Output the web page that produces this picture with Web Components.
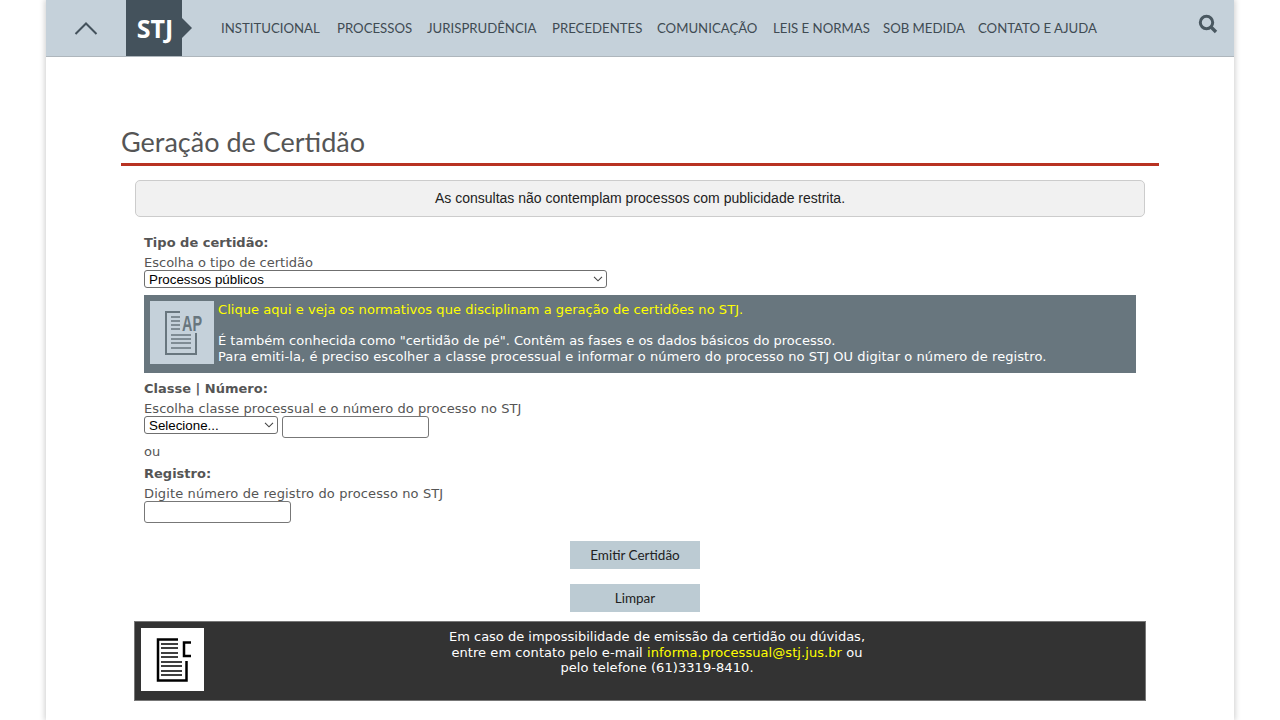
<!DOCTYPE html>
<html lang="pt-BR">
<head>
<meta charset="utf-8">
<title>Geração de Certidão</title>
<style>
    html, body { margin: 0; height: 720px; overflow: hidden; background: #fff; }
</style>
</head>
<body>
<stj-page>
    <stj-header></stj-header>
    <stj-title>Geração de Certidão</stj-title>
    <stj-notice>As consultas não contemplam processos com publicidade restrita.</stj-notice>
    <stj-form></stj-form>
    <stj-contact></stj-contact>
</stj-page>

<script>
class StjPage extends HTMLElement {
    constructor() {
        super();
        this.attachShadow({ mode: "open" });
        this.shadowRoot.innerHTML = `
<style>
    :host {
        display: block;
        width: 1188px;
        height: 720px;
        margin-left: 46px;
        background: #fff;
        box-shadow: 0 0 6px 1px #0003;
    }
</style>
<slot></slot>`;
    }
}

class StjHeader extends HTMLElement {
    constructor() {
        super();
        this.attachShadow({ mode: "open" });
        const items = ["INSTITUCIONAL", "PROCESSOS", "JURISPRUDÊNCIA", "PRECEDENTES", "COMUNICAÇÃO", "LEIS E NORMAS", "SOB MEDIDA", "CONTATO E AJUDA"];
        this.shadowRoot.innerHTML = `
<style>
    :host {
        display: flex;
        align-items: stretch;
        height: 56px;
        background: #c5d1da;
        border-bottom: 1px solid #aeb6bc;
        font-family: "Lato", sans-serif;
        color: #3f4b53;
    }
    .toggle {
        width: 80px;
        display: flex;
        align-items: center;
        justify-content: center;
    }
    .logo {
        position: relative;
        width: 56px;
        box-sizing: border-box;
        padding-left: 2px;
        margin-right: 39px;
        display: flex;
        align-items: center;
        justify-content: center;
        background: #44525c;
        color: #fff;
        font: 700 25px "Open Sans", sans-serif;
    }
    .logo::after {
        content: "";
        position: absolute;
        left: 56px;
        top: 18px;
        border-left: 10px solid #44525c;
        border-top: 10px solid transparent;
        border-bottom: 10px solid transparent;
    }
    nav {
        display: grid;
        grid-template-columns: 101px 75px 110px 90px 101px 95px 80px 121px;
        column-gap: 15px;
        align-items: center;
        flex: 1;
        font-size: 13.2px;
        white-space: nowrap;
    }
    .search {
        width: 52px;
        display: flex;
        justify-content: center;
        padding-top: 14px;
        box-sizing: border-box;
    }
</style>
<div class="toggle">
    <svg width="24" height="14" viewBox="0 0 24 14" fill="none" stroke="#44525c" stroke-width="2"><path d="M1.5 13 12 2.5 22.5 13"/></svg>
</div>
<div class="logo">STJ</div>
<nav>${items.map(item => `<span>${item}</span>`).join("")}</nav>
<div class="search">
    <svg width="20" height="20" viewBox="0 0 20 20" fill="none" stroke="#4a5861"><circle cx="8.500" cy="8.500" r="6.200" stroke-width="3"/><path d="M13 13l5 5" stroke-width="3.400"/></svg>
</div>`;
    }
}

class StjTitle extends HTMLElement {
    constructor() {
        super();
        this.attachShadow({ mode: "open" });
        this.shadowRoot.innerHTML = `
<style>
    :host {
        display: block;
        margin: 0 75px 0;
        padding-top: 70px;
        height: 36px;
        border-bottom: 3px solid #b83222;
        font: 400 27px/30px "Lato", sans-serif;
        color: #555;
    }
</style>
<slot></slot>`;
    }
}

class StjNotice extends HTMLElement {
    constructor() {
        super();
        this.attachShadow({ mode: "open" });
        this.shadowRoot.innerHTML = `
<style>
    :host {
        display: flex;
        align-items: center;
        justify-content: center;
        box-sizing: border-box;
        height: 37px;
        margin: 14px 89px 0;
        padding-bottom: 2px;
        background: #f1f1f1;
        border: 1px solid #ccc;
        border-radius: 5px;
        font: 14px "Liberation Sans", sans-serif;
        color: #222;
    }
</style>
<slot></slot>`;
    }
}

class StjField extends HTMLElement {
    constructor() {
        super();
        this.attachShadow({ mode: "open" });
        this.shadowRoot.innerHTML = `
<style>
    :host {
        display: block;
        font: 13px/15px "DejaVu Sans", Verdana, sans-serif;
        color: #555;
    }
    .label { font-weight: 700; font-size: 13px; line-height: 16px; margin-bottom: 5px; }
    .hint { line-height: 14px; letter-spacing: var(--hint-spacing, 0.07px); }
</style>
<div class="label">${this.getAttribute("label")}</div>
<div class="hint">${this.getAttribute("hint")}</div>
<slot></slot>`;
    }
}

class StjSelect extends HTMLElement {
    constructor() {
        super();
        this.attachShadow({ mode: "open" });
        this.shadowRoot.innerHTML = `
<style>
    :host {
        display: inline-block;
        position: relative;
        vertical-align: top;
        height: 18px;
    }
    select {
        appearance: none;
        display: block;
        box-sizing: border-box;
        width: 100%;
        height: 100%;
        margin: 0;
        padding: 0 0 0 4px;
        background: #fff;
        border: 1px solid #6f6f6f;
        border-radius: 3px;
        font: 13.33px "Liberation Sans", sans-serif;
        color: #000;
    }
    svg { position: absolute; right: 4px; top: 6px; }
</style>
<select><option>${this.getAttribute("value")}</option></select>
<svg width="10" height="6" viewBox="0 0 10 6" fill="none" stroke="#444" stroke-width="1.100"><path d="M1 .8 5 4.800 9 .8"/></svg>`;
    }
}

class StjInfo extends HTMLElement {
    constructor() {
        super();
        this.attachShadow({ mode: "open" });
        this.shadowRoot.innerHTML = `
<style>
    :host {
        display: flex;
        box-sizing: border-box;
        height: 78px;
        padding: 6px 6px 0;
        gap: 4px;
        background: #68767e;
        color: #fff;
        font: 13px/15.6px "DejaVu Sans", Verdana, sans-serif;
    }
    .icon {
        width: 64px;
        height: 63px;
        background: #c5d1da;
        flex: none;
    }
    .icon svg { display: block; }
    a { color: #ff0; text-decoration: none; display: block; margin-bottom: 15.6px; letter-spacing: 0.05px; }
    .text { padding-top: 1px; }
    .wide { letter-spacing: 0.08px; }
</style>
<div class="icon">
    <svg width="64" height="63" viewBox="0 0 64 63" fill="none" stroke="#68767e">
        <path d="M30 11H16V53H46V32" stroke-width="2"/>
        <path d="M21 16h9M21 20h9M21 24h9M21 28h9M21 34h20M21 38h20M21 42h20M21 47h20" stroke-width="1.600"/>
        <text x="32" y="30" font-family="Liberation Sans, sans-serif" font-weight="700" font-size="22" textLength="20" lengthAdjust="spacingAndGlyphs" fill="#68767e" stroke="none">AP</text>
    </svg>
</div>
<div class="text">
    <a href="#">Clique aqui e veja os normativos que disciplinam a geração de certidões no STJ.</a>
    <div>É também conhecida como "certidão de pé". Contêm as fases e os dados básicos do processo.</div>
    <div class="wide">Para emiti-la, é preciso escolher a classe processual e informar o número do processo no STJ OU digitar o número de registro.</div>
</div>`;
    }
}

class StjForm extends HTMLElement {
    constructor() {
        super();
        this.attachShadow({ mode: "open" });
        this.shadowRoot.innerHTML = `
<style>
    :host {
        display: block;
        margin: 0 98px;
        padding-top: 18px;
    }
    input {
        box-sizing: border-box;
        display: inline-block;
        vertical-align: top;
        width: 147px;
        height: 22px;
        margin: 0;
        background: #fff;
        border: 1px solid #777;
        border-radius: 3px;
    }
    .info { margin: 11px 0 8px; }
    .row { display: flex; gap: 4px; align-items: flex-start; }
    .or { font: 13px/15px "DejaVu Sans", Verdana, sans-serif; color: #555; margin: 6px 0 7px; }
    .actions {
        display: flex;
        flex-direction: column;
        align-items: center;
        gap: 15px;
        margin-top: 18px;
        padding-right: 10px;
    }
    stj-field.first { height: 49px; --hint-spacing: 0; }
    stj-field.registro { --hint-spacing: 0.12px; }
</style>
<stj-field class="first" label="Tipo de certidão:" hint="Escolha o tipo de certidão">
    <stj-select value="Processos públicos" style="width:463px"></stj-select>
</stj-field>
<stj-info class="info"></stj-info>
<stj-field label="Classe | Número:" hint="Escolha classe processual e o número do processo no STJ">
    <div class="row">
        <stj-select value="Selecione..." style="width:134px"></stj-select>
        <input type="text" aria-label="Número">
    </div>
</stj-field>
<div class="or">ou</div>
<stj-field class="registro" label="Registro:" hint="Digite número de registro do processo no STJ">
    <input type="text" aria-label="Registro">
</stj-field>
<div class="actions">
    <stj-button>Emitir Certidão</stj-button>
    <stj-button>Limpar</stj-button>
</div>`;
    }
}

class StjButton extends HTMLElement {
    constructor() {
        super();
        this.attachShadow({ mode: "open" });
        this.shadowRoot.innerHTML = `
<style>
    :host {
        display: flex;
        align-items: center;
        justify-content: center;
        width: 130px;
        height: 28px;
        background: #bccbd3;
        font: 13.500px "Lato", sans-serif;
        color: #222;
    }
</style>
<slot></slot>`;
    }
}

class StjContact extends HTMLElement {
    constructor() {
        super();
        this.attachShadow({ mode: "open" });
        this.shadowRoot.innerHTML = `
<style>
    :host {
        display: flex;
        box-sizing: border-box;
        height: 80px;
        margin: 9px 88px 0;
        padding: 6px;
        background: #333;
        border: 1px solid #777;
        color: #fff;
        font: 13px/15.5px "DejaVu Sans", Verdana, sans-serif;
    }
    .icon {
        flex: none;
        width: 63px;
        height: 63px;
        background: #fff;
    }
    .icon svg { display: block; }
    .text { flex: 1; text-align: center; padding: 1px 29px 0 0; }
    .wide { letter-spacing: 0.07px; }
    a { color: #ff0; text-decoration: none; }
</style>
<div class="icon">
    <svg width="63" height="63" viewBox="0 0 63 63" fill="none" stroke="#000">
        <path d="M37 11.500H17V52.500H45.500V33" stroke-width="2.500"/>
        <path d="M20 16h17M20 20h17M20 25h17M20 29h17M20 34h21M20 38h21M20 43h21M20 47h21" stroke-width="1.500"/>
        <path d="M50 14.500H43V28H50" stroke-width="2.500"/>
    </svg>
</div>
<div class="text">
    <div>Em caso de impossibilidade de emissão da certidão ou dúvidas,</div>
    <div class="wide">entre em contato pelo e-mail <a href="#">informa.processual@stj.jus.br</a> ou</div>
    <div class="wide">pelo telefone (61)3319-8410.</div>
</div>`;
    }
}

customElements.define("stj-page", StjPage);
customElements.define("stj-header", StjHeader);
customElements.define("stj-title", StjTitle);
customElements.define("stj-notice", StjNotice);
customElements.define("stj-field", StjField);
customElements.define("stj-select", StjSelect);
customElements.define("stj-info", StjInfo);
customElements.define("stj-form", StjForm);
customElements.define("stj-button", StjButton);
customElements.define("stj-contact", StjContact);
</script>
</body>
</html>
